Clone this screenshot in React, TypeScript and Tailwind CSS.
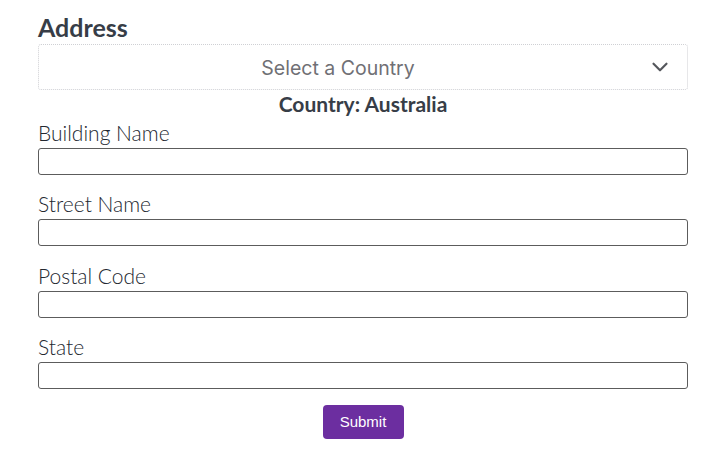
import { ChevronDown } from 'lucide-react';

const fields = ['Building Name', 'Street Name', 'Postal Code', 'State'];

const App = () => {
  return (
    <div className="w-[714px] h-[458px] bg-white pl-[38px] pr-[26px] pt-[13px] font-['Lato','Noto_Sans',sans-serif] text-[#373d47]">
      <h2 className="text-[25px] leading-[28px] font-bold mb-[3px]">Address</h2>
      <div className="relative h-[46px] rounded-[3px] border border-dotted border-[#cfd0d4] flex items-center justify-center pr-[50px] pt-[3px]">
        <span className="text-[19.5px] font-['Inter',sans-serif] text-[#707075]">Select a Country</span>
        <ChevronDown className="absolute right-[14px] top-1/2 -translate-y-1/2 w-[26px] h-[26px] text-[#55575c]" strokeWidth={2} />
      </div>
      <p className="text-center text-[21px] leading-[24px] font-bold mt-[2px] mb-[5px]">Country: Australia</p>
      <form className="flex flex-col gap-[17.4px]">
        {fields.map((f) => (
          <div key={f} className="flex flex-col">
            <label className="text-[21px] leading-[24px] font-light text-[#232830] mb-[3px]">{f}</label>
            <input className="h-[27px] rounded-[3px] border border-[#5c5c5c] outline-none" />
          </div>
        ))}
      </form>
      <div className="flex justify-center mt-[16px]">
        <button className="w-[81px] h-[34px] rounded-[4px] bg-[#6c2ea0] text-white text-[15px] font-['Liberation_Sans',Arial,sans-serif]">
          Submit
        </button>
      </div>
    </div>
  );
};

export default App;
